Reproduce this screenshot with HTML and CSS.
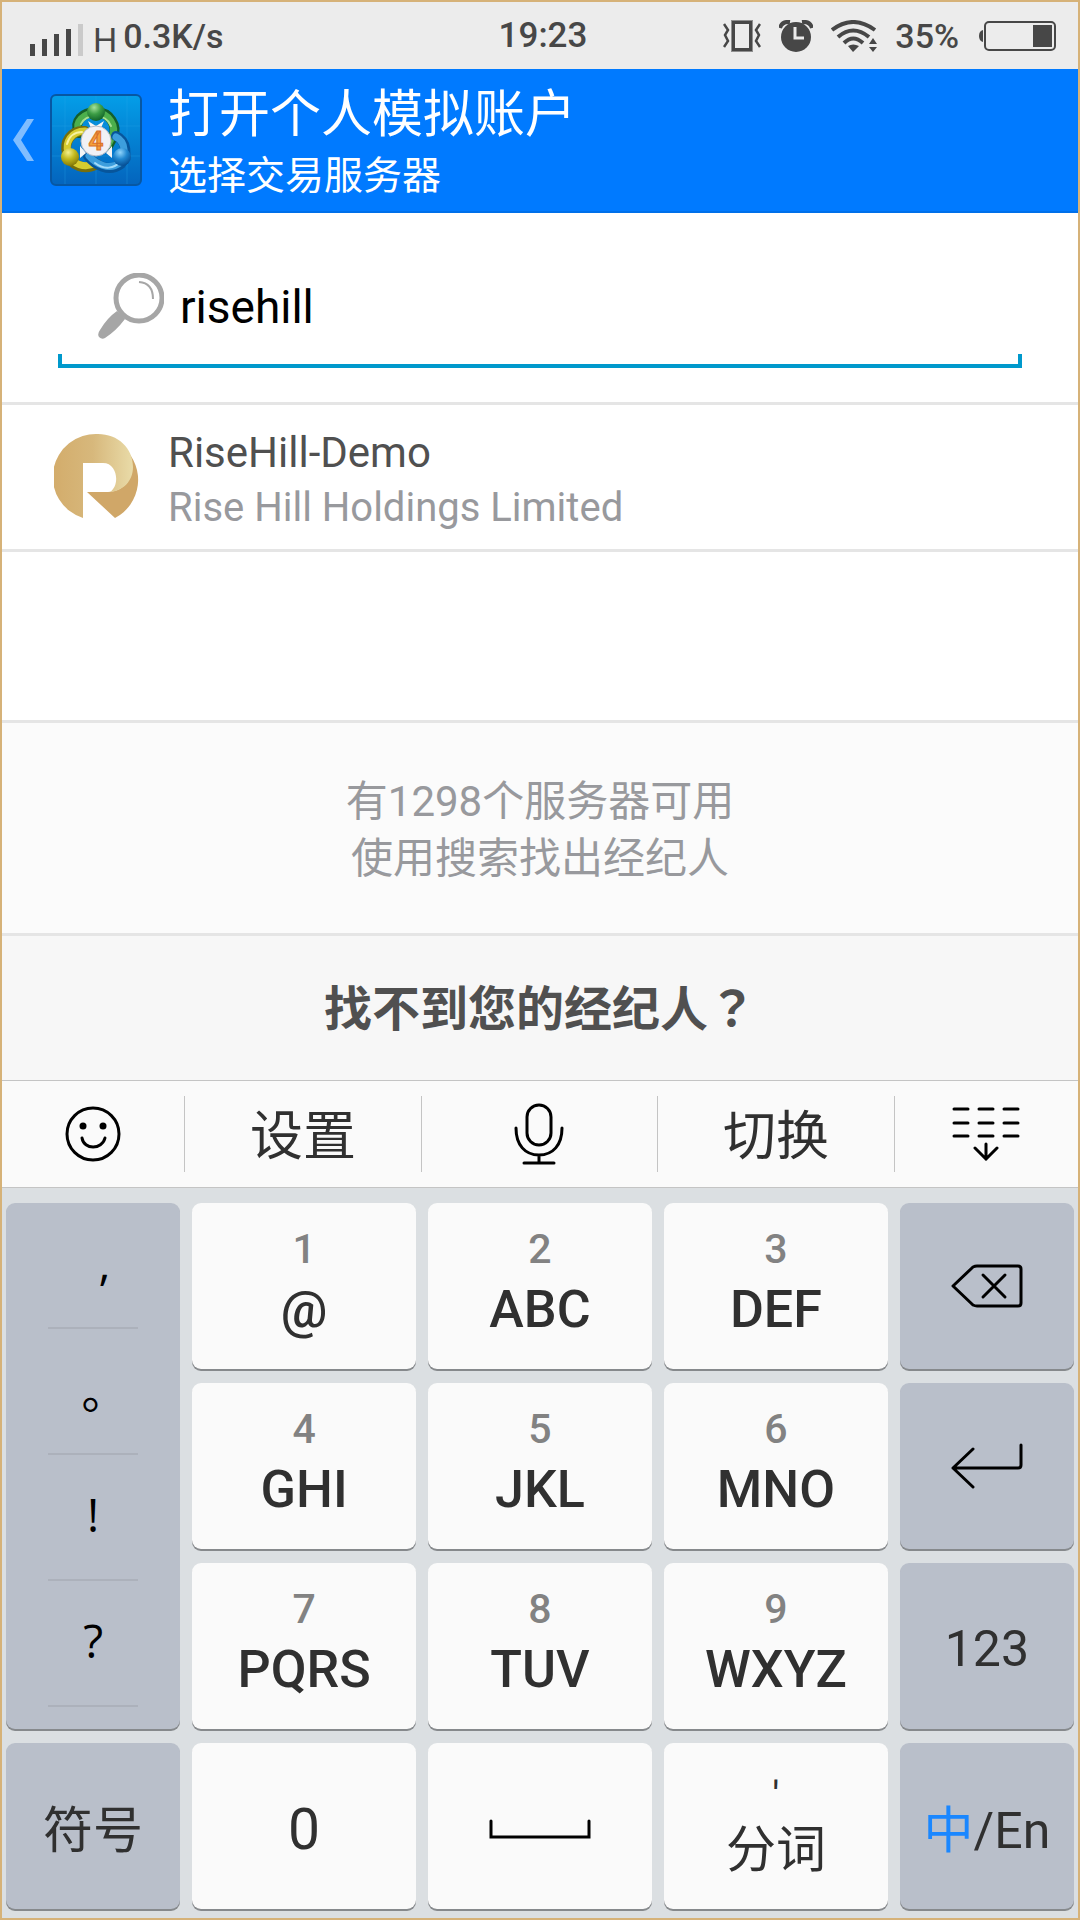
FILE: index.html
```html
<!DOCTYPE html>
<html lang="zh-CN">
<head>
    <meta charset="UTF-8">
    <meta name="viewport" content="width=device-width, initial-scale=1.0">
    <title>打开个人模拟账户</title>
    <link rel="stylesheet" href="styles.css">
</head>
<body>
    <div class="status-bar">
        <div class="status-left">
            <svg width="54" height="32" viewBox="0 0 54 32" fill="#474747">
                <rect x="0" y="20" width="5" height="12"/>
                <rect x="12" y="15" width="5" height="17"/>
                <rect x="24" y="10" width="5" height="22"/>
                <rect x="36" y="5" width="5" height="27"/>
                <rect x="48" y="0" width="5" height="32" fill="#cacaca"/>
            </svg>
            <span class="network">H</span>
            <span>0.3K/s</span>
        </div>
        <span class="clock">19:23</span>
        <div class="status-right">
            <!-- Vibrate -->
            <svg width="38" height="32" viewBox="0 0 38 32" fill="none" stroke="#474747">
                <rect x="8" y="0" width="22" height="32" fill="#8f8f8f" stroke="none"/>
                <rect x="9" y="1" width="20" height="30" fill="#474747" stroke="none"/>
                <rect x="12" y="4" width="14" height="24" fill="#ececec" stroke="none"/>
                <path d="M1 4 L5 10 L2 15 L5 21 L1 27 M37 4 L33 10 L36 15 L33 21 L37 27" stroke-width="2.5"/>
            </svg>
            <!-- Alarm -->
            <svg width="34" height="32" viewBox="0 0 34 32">
                <circle cx="17" cy="17" r="15" fill="#474747"/>
                <path d="M1 8 Q3 1 11 2 M33 8 Q31 1 23 2" fill="none" stroke="#474747" stroke-width="4"/>
                <path d="M16 7 V18 H25" fill="none" stroke="#ececec" stroke-width="3"/>
            </svg>
            <!-- Wifi -->
            <svg width="46" height="32" viewBox="0 0 46 32" fill="none" stroke="#474747" stroke-width="4">
                <path d="M1 10 Q22 -6 44 10"/>
                <path d="M7 17 Q22 4 38 17"/>
                <path d="M13 23 Q22 14 32 23"/>
                <path d="M17 26 Q22 23 28 26 L22 32 Z M38 24 H46 L42 18 Z M38 27 H46 L42 32 Z" fill="#474747" stroke="none"/>
            </svg>
            <span class="battery-level">35%</span>
            <svg width="77" height="30" viewBox="0 0 77 30">
                <path d="M4 9 Q0 10 0 15 Q0 20 4 21 Z" fill="#474747"/>
                <rect x="6" y="1" width="70" height="28" rx="4" fill="none" stroke="#474747" stroke-width="2"/>
                <rect x="54" y="4" width="19" height="22" fill="#474747"/>
            </svg>
        </div>
    </div>

    <header class="header">
        <button class="back" type="button" aria-label="返回">
            <svg width="21" height="42" viewBox="0 0 21 42">
                <path d="M14 0 H21 L8 21 L21 42 H14 L0 21 Z" fill="#80bdff"/>
            </svg>
        </button>
        <svg class="app-logo" width="92" height="92" viewBox="0 0 92 92">
            <defs>
                <linearGradient id="tile" x1="0" y1="0" x2="0" y2="1">
                    <stop offset="0" stop-color="#049ee8"/>
                    <stop offset="1" stop-color="#0464bd"/>
                </linearGradient>
                <radialGradient id="greenBall" cx=".4" cy=".25" r=".75">
                    <stop offset="0" stop-color="#a5e29c"/>
                    <stop offset=".5" stop-color="#3c9d45"/>
                    <stop offset="1" stop-color="#11642a"/>
                </radialGradient>
                <radialGradient id="yellowBall" cx=".4" cy=".25" r=".75">
                    <stop offset="0" stop-color="#f4f08c"/>
                    <stop offset=".5" stop-color="#c2b91d"/>
                    <stop offset="1" stop-color="#867b08"/>
                </radialGradient>
                <radialGradient id="blueBall" cx=".4" cy=".25" r=".75">
                    <stop offset="0" stop-color="#8fd4fb"/>
                    <stop offset=".5" stop-color="#2087d0"/>
                    <stop offset="1" stop-color="#064f95"/>
                </radialGradient>
            </defs>
            <rect x="1" y="1" width="90" height="90" rx="5" fill="url(#tile)" stroke="#0757a3" stroke-width="2"/>
            <path d="M2 32 H90 M2 62 H90 M15 2 V90 M46 2 V90 M77 2 V90" stroke="#2aa5ea" stroke-opacity=".3"/>
            <g fill="none" stroke-linecap="round">
                <path d="M29 39 C23 27 33 18 46 18 C60 18 68 32 63 43 L58 52" stroke="#145f2b" stroke-width="10"/>
                <path d="M29 38 C24 28 34 19 46 19 C59 19 67 32 62 43 L58 51" stroke="#4caf4c" stroke-width="7"/>
                <path d="M31 30 C35 20 55 18 61 32" stroke="#a6df91" stroke-width="2"/>
                <path d="M35 37 C20 36 14 49 17 59 C21 72 35 77 47 70" stroke="#766e0b" stroke-width="10"/>
                <path d="M35 37 C21 37 15 49 18 58 C22 71 35 75 46 69" stroke="#d6cc30" stroke-width="7"/>
                <path d="M17 50 C19 42 25 38 32 38" stroke="#f8f2a0" stroke-width="2"/>
                <path d="M66 42 C77 47 78 62 71 70 C59 79 45 71 38 62" stroke="#07559b" stroke-width="10"/>
                <path d="M66 43 C76 48 76 62 70 69 C59 77 46 70 39 62" stroke="#3d9edd" stroke-width="7"/>
                <path d="M45 69 C54 76 64 75 71 67" stroke="#a3dbfa" stroke-width="2"/>
            </g>
            <circle cx="46" cy="18" r="9" fill="url(#greenBall)"/>
            <circle cx="20" cy="63" r="9" fill="url(#yellowBall)"/>
            <circle cx="72" cy="63" r="9" fill="url(#blueBall)"/>
            <path d="M38 27 L46 32 L54 27 L51 34 H41 Z M30 52 V64 L36 59 Z M62 52 V64 L56 59 Z" fill="#f5f5f5"/>
            <circle cx="46" cy="47" r="15" fill="#f1f1f5" stroke="#b7bbc6"/>
            <text class="logo-number" x="46" y="56" text-anchor="middle">4</text>
        </svg>
        <div class="header-text">
            <h1>打开个人模拟账户</h1>
            <p>选择交易服务器</p>
        </div>
    </header>

    <main class="content">
        <div class="search">
            <label class="search-field">
                <svg width="66" height="66" viewBox="0 0 66 66" fill="none" stroke="#a6a6a6">
                    <circle cx="41" cy="25" r="23" stroke-width="5"/>
                    <path d="M41 9 Q55 10 55 26" stroke-width="2"/>
                    <path d="M19 38 L27 46 Q18 58 7 65 Q4 67 1 64 Q-1 61 2 57 Q9 45 19 38 Z" fill="#a6a6a6" stroke="none"/>
                </svg>
                <input type="text" value="risehill" aria-label="搜索服务器">
            </label>
        </div>

        <a class="broker" href="#">
            <svg width="88" height="88" viewBox="0 0 88 88">
                <defs>
                    <linearGradient id="goldLight" x1="0" y1=".3" x2="1" y2=".3">
                        <stop offset="0" stop-color="#d3ac6b"/>
                        <stop offset=".5" stop-color="#d7b87c"/>
                        <stop offset="1" stop-color="#e9dba8"/>
                    </linearGradient>
                </defs>
                <path d="M70 15 A43 43 0 0 1 61 85 L33 59 H54 C76 58 86 34 70 15 Z" fill="#d0a768"/>
                <path d="M29 85 A43 43 0 0 1 44 1 C64 1 79 15 79 34 C79 48 69 58 56 59 C66 53 64 30 49 30 H29 Z" fill="url(#goldLight)"/>
            </svg>
            <div class="broker-text">
                <p class="server">RiseHill-Demo</p>
                <p class="company">Rise Hill Holdings Limited</p>
            </div>
        </a>

        <div class="empty"></div>

        <div class="info">
            <p>有1298个服务器可用</p>
            <p>使用搜索找出经纪人</p>
        </div>

        <button class="not-found" type="button">找不到您的经纪人<span class="mark" lang="zh-TW">？</span></button>
    </main>

    <div class="keyboard">
        <div class="toolbar">
            <button type="button" aria-label="表情">
                <svg width="56" height="58" viewBox="0 0 56 58" fill="none" stroke="#000" stroke-width="3" stroke-linecap="round">
                    <ellipse cx="28" cy="29" rx="26" ry="26"/>
                    <path d="M17 33 C19 45 37 45 40 33"/>
                    <circle cx="18" cy="21" r="3.5" fill="#000" stroke="none"/>
                    <circle cx="38" cy="21" r="3.5" fill="#000" stroke="none"/>
                </svg>
            </button>
            <button class="word" type="button">设置</button>
            <button type="button" aria-label="语音">
                <svg width="50" height="62" viewBox="0 0 50 62" fill="none" stroke="#000" stroke-width="3" stroke-linecap="round">
                    <rect x="13" y="2" width="24" height="40" rx="12"/>
                    <path d="M2 25 C2 42 11 52 25 52 C39 52 48 42 48 25 M25 52 V60 M10 60 H40"/>
                </svg>
            </button>
            <button class="word" type="button">切换</button>
            <button type="button" aria-label="收起键盘">
                <svg width="68" height="54" viewBox="0 0 68 54" fill="none" stroke="#000" stroke-width="3" stroke-linecap="round">
                    <path d="M2 2 H16 M27 2 H41 M52 2 H66 M2 16 H16 M27 16 H41 M52 16 H66 M2 29 H16 M27 29 H41 M52 29 H66"/>
                    <path d="M34 37 V52 M23 41 L34 52 L45 41"/>
                </svg>
            </button>
        </div>

        <div class="keys">
            <div class="key-side punctuation">
                <button type="button">&ensp;,</button>
                <button type="button">。</button>
                <button type="button">!</button>
                <button type="button">?</button>
            </div>
            <button class="key" type="button"><span class="num">1</span><span class="letters">@</span></button>
            <button class="key" type="button"><span class="num">2</span><span class="letters">ABC</span></button>
            <button class="key" type="button"><span class="num">3</span><span class="letters">DEF</span></button>
            <button class="key-side" type="button" aria-label="删除">
                <svg width="72" height="44" viewBox="0 0 72 44" fill="none" stroke="#000" stroke-width="3" stroke-linecap="round" stroke-linejoin="round">
                    <path d="M2 22 L22 3 Q24 2 26 2 H67 Q70 2 70 5 V39 Q70 42 67 42 H26 Q24 42 22 41 Z"/>
                    <path d="M32 11 L54 33 M54 11 L32 33"/>
                </svg>
            </button>

            <button class="key" type="button"><span class="num">4</span><span class="letters">GHI</span></button>
            <button class="key" type="button"><span class="num">5</span><span class="letters">JKL</span></button>
            <button class="key" type="button"><span class="num">6</span><span class="letters">MNO</span></button>
            <button class="key-side" type="button" aria-label="换行">
                <svg width="72" height="46" viewBox="0 0 72 46" fill="none" stroke="#000" stroke-width="3" stroke-linecap="round" stroke-linejoin="round">
                    <path d="M70 2 V22 Q70 25 67 25 H2 M22 6 L2 25 L22 44"/>
                </svg>
            </button>

            <button class="key" type="button"><span class="num">7</span><span class="letters">PQRS</span></button>
            <button class="key" type="button"><span class="num">8</span><span class="letters">TUV</span></button>
            <button class="key" type="button"><span class="num">9</span><span class="letters">WXYZ</span></button>
            <button class="key-side digits" type="button">123</button>

            <button class="key-side" type="button">符号</button>
            <button class="key zero" type="button">0</button>
            <button class="key space" type="button" aria-label="空格">
                <svg width="102" height="20" viewBox="0 0 102 20" fill="none" stroke="#000" stroke-width="3" stroke-linecap="round">
                    <path d="M2 2 V18 H100 V2"/>
                </svg>
            </button>
            <button class="key split" type="button"><span class="num">'</span><span class="letters">分词</span></button>
            <button class="key-side" type="button"><span><span class="active">中</span>/En</span></button>
        </div>
    </div>
</body>
</html>
```
FILE: styles.css
```css
* {
    box-sizing: border-box;
}

body {
    font-family: Roboto, "Noto Sans CJK SC", sans-serif;
    display: flex;
    flex-direction: column;
    min-height: 100vh;
    margin: 0;
    border: 2px solid #d6b278;
    background-color: white;
}

h1, p {
    margin: 0;
    font-weight: 400;
}

button {
    font-family: inherit;
    color: #303030;
    border: none;
    padding: 0;
    background: none;
}

svg {
    display: block;
    flex-shrink: 0;
}

/* Status bar */
.status-bar {
    display: grid;
    grid-template-columns: 1fr auto 1fr;
    align-items: center;
    height: 67px;
    padding: 0 22px 0 28px;
    background-color: #ececec;
    color: #474747;
    font-size: 34px;
    font-weight: 500;
}

.status-left, .status-right {
    display: flex;
    align-items: center;
}

.status-left svg, .network {
    margin-top: 8px;
}

.network {
    margin: 8px 6px 0 9px;
    font-size: 34px;
    font-weight: 400;
}

.clock {
    font-size: 35px;
}

.status-right {
    justify-content: flex-end;
    gap: 18px;
}

.battery-level {
    margin-right: 2px;
}

/* Header */
.header {
    display: flex;
    align-items: center;
    height: 144px;
    padding: 0 11px;
    background-color: #007aff;
    border-bottom: 2px solid #0070ea;
    color: white;
}

.app-logo {
    margin: 0 26px 0 16px;
}

.logo-number {
    font-size: 26px;
    font-weight: 700;
    fill: #f6a13a;
    stroke: #d9702a;
}

.header-text {
    padding-top: 6px;
}

.header h1 {
    font-size: 51px;
    line-height: 66px;
}

.header p {
    font-size: 39px;
    line-height: 56px;
}

/* Search */
.content {
    display: flex;
    flex-direction: column;
    flex: 1;
}

.search {
    padding: 35px 56px 34px;
    border-bottom: 3px solid #e5e5e5;
}

.search-field {
    display: flex;
    align-items: center;
    gap: 16px;
    height: 120px;
    padding: 0 40px;
    border-bottom: 4px solid #0099cc;
    background: linear-gradient(#0099cc, #0099cc) left bottom / 4px 10px no-repeat,
                linear-gradient(#0099cc, #0099cc) right bottom / 4px 10px no-repeat;
}

.search-field input {
    flex: 1;
    min-width: 0;
    padding: 2px 0 0;
    border: none;
    outline: none;
    background: none;
    font-family: inherit;
    font-size: 46px;
    color: black;
}

/* Broker */
.broker {
    display: flex;
    align-items: center;
    gap: 26px;
    height: 147px;
    padding: 0 52px;
    border-bottom: 3px solid #e5e5e5;
    text-decoration: none;
}

.broker-text {
    padding-top: 6px;
}

.server {
    font-size: 42px;
    line-height: 55px;
    color: #505050;
}

.company {
    font-size: 40px;
    line-height: 55px;
    color: #98999d;
}

.empty {
    flex: 1;
    border-bottom: 3px solid #e5e5e5;
}

.info {
    padding: 50px 0 46px;
    background-color: #fbfbfb;
    border-bottom: 3px solid #e5e5e5;
    text-align: center;
    font-size: 42px;
    line-height: 57px;
    color: #98999d;
}

.not-found {
    height: 144px;
    padding-bottom: 6px;
    background-color: #f7f7f7;
    color: #505050;
    font-size: 48px;
    font-weight: 700;
}

.mark {
    font-family: "Noto Sans CJK TC", sans-serif;
}

/* Keyboard */
.keyboard {
    background-color: #dbdfe2;
}

.toolbar {
    display: grid;
    grid-template-columns: 31fr 40fr 40fr 40fr 31fr;
    height: 108px;
    padding: 15px 0;
    background-color: #fafafa;
    border-top: 1px solid #c4c4c4;
    border-bottom: 1px solid #c4c4c4;
}

.toolbar button {
    display: flex;
    align-items: center;
    justify-content: center;
    border-right: 1px solid #c4c4c4;
    font-size: 53px;
    line-height: 60px;
}

.toolbar button:last-child {
    border-right: none;
}

.toolbar .word {
    padding-top: 6px;
}

.keys {
    display: grid;
    grid-template-columns: 35fr 45fr 45fr 45fr 35fr;
    grid-auto-rows: 166px;
    gap: 14px 12px;
    padding: 15px 4px 9px;
}

.key, .key-side {
    display: flex;
    flex-direction: column;
    align-items: center;
    justify-content: center;
    min-width: 0;
    border-radius: 9px;
    box-shadow: 0 2px 0 #86898c;
    font-size: 50px;
}

.key {
    padding-bottom: 8px;
    background-color: #fafafa;
}

.key-side {
    background-color: #b9bfca;
}

.num {
    font-size: 41px;
    line-height: 56px;
    font-weight: 500;
    color: #828282;
}

.letters {
    font-size: 52px;
    line-height: 66px;
    font-weight: 500;
}

.zero, .space, .digits {
    padding-top: 6px;
    padding-bottom: 0;
}

.zero {
    font-size: 57px;
}

.split {
    padding-bottom: 0;
}

.split .num, .split .letters {
    color: #303030;
    font-weight: 400;
}

.split .num {
    line-height: 48px;
}

.split .letters {
    font-size: 50px;
    line-height: 60px;
}

.active {
    color: #1a87ff;
}

.punctuation {
    grid-row: span 3;
    justify-content: flex-start;
    align-items: stretch;
    padding: 0 42px;
}

.punctuation button {
    height: 126px;
    padding-bottom: 6px;
    border-bottom: 2px solid #acb1bb;
    font-family: "Open Sans", "Noto Sans CJK SC", sans-serif;
    font-feature-settings: "halt";
    font-size: 46px;
    color: black;
}
```
